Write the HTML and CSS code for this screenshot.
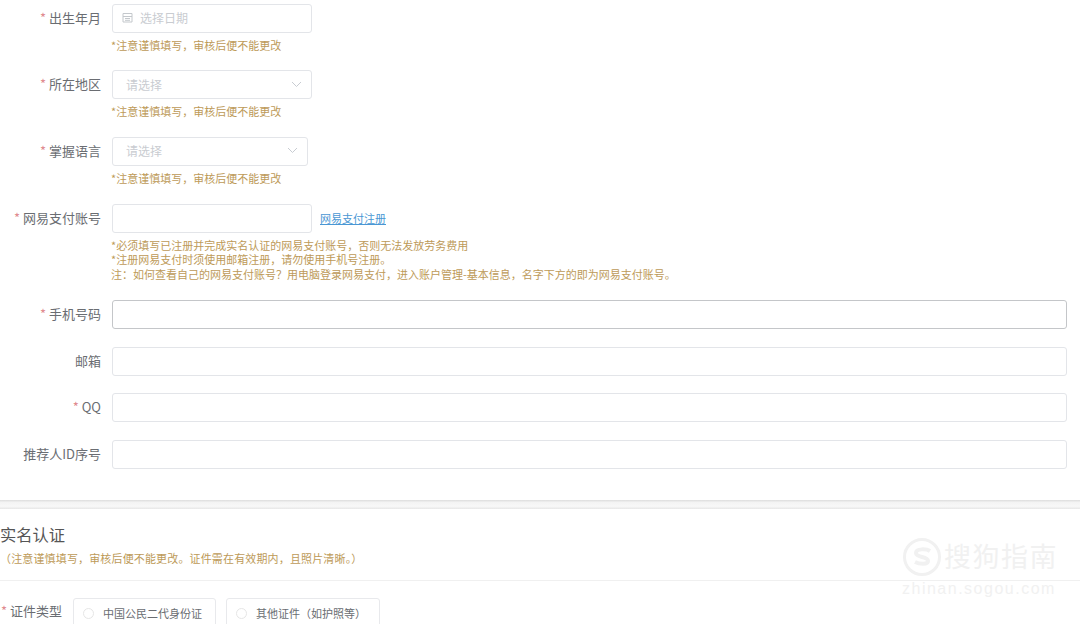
FILE: index.html
```html
<!DOCTYPE html>
<html lang="zh-CN">
<head>
<meta charset="utf-8">
<title>实名认证</title>
<link rel="stylesheet" href="styles.css">
</head>
<body>
<div class="page">
  <form class="form">
    <div class="row r-note">
      <label class="label"><span class="star">*</span> 出生年月</label>
      <div class="field">
        <div class="box w-200 date">
          <svg class="cal" width="11" height="11" viewBox="0 0 11 11"><path d="M1 1.500h9v8.500H1zM1 4.500h9M3 6.500h5M3 8.300h5" fill="none" stroke="#c4c8cc" stroke-width="1"/></svg>
          <span class="ph">选择日期</span>
        </div>
        <p class="note">*注意谨慎填写，审核后便不能更改</p>
      </div>
    </div>
    <div class="row r-note">
      <label class="label"><span class="star">*</span> 所在地区</label>
      <div class="field">
        <div class="box w-200 select">
          <span class="ph">请选择</span>
          <svg class="chev" width="11" height="7" viewBox="0 0 11 7"><path d="M1 1l4.500 4.500L10 1" fill="none" stroke="#c8ccd2" stroke-width="1"/></svg>
        </div>
        <p class="note">*注意谨慎填写，审核后便不能更改</p>
      </div>
    </div>
    <div class="row r-note">
      <label class="label"><span class="star">*</span> 掌握语言</label>
      <div class="field">
        <div class="box w-196 select">
          <span class="ph">请选择</span>
          <svg class="chev" width="11" height="7" viewBox="0 0 11 7"><path d="M1 1l4.500 4.500L10 1" fill="none" stroke="#c8ccd2" stroke-width="1"/></svg>
        </div>
        <p class="note">*注意谨慎填写，审核后便不能更改</p>
      </div>
    </div>
    <div class="row r-pay">
      <label class="label"><span class="star">*</span> 网易支付账号</label>
      <div class="field">
        <div class="inline">
          <div class="box w-200"></div>
          <a class="link" href="#">网易支付注册</a>
        </div>
        <p class="note multi">*必须填写已注册并完成实名认证的网易支付账号，否则无法发放劳务费用<br>*注册网易支付时须使用邮箱注册，请勿使用手机号注册。<br>注：如何查看自己的网易支付账号？用电脑登录网易支付，进入账户管理-基本信息，名字下方的即为网易支付账号。</p>
      </div>
    </div>
    <div class="row r-full">
      <label class="label"><span class="star">*</span> 手机号码</label>
      <div class="field"><div class="box focus"></div></div>
    </div>
    <div class="row r-full">
      <label class="label">邮箱</label>
      <div class="field"><div class="box"></div></div>
    </div>
    <div class="row r-full">
      <label class="label"><span class="star">*</span> QQ</label>
      <div class="field"><div class="box"></div></div>
    </div>
    <div class="row">
      <label class="label">推荐人ID序号</label>
      <div class="field"><div class="box"></div></div>
    </div>
  </form>
  <div class="band"></div>
  <section class="realname">
    <h2 class="title">实名认证</h2>
    <p class="sub">（注意谨慎填写，审核后便不能更改。证件需在有效期内，且照片清晰。）</p>
    <div class="idrow">
      <span class="idlabel"><span class="star">*</span> 证件类型</span>
      <div class="opt opt-a"><i class="radio"></i>中国公民二代身份证</div>
      <div class="opt opt-b"><i class="radio"></i>其他证件（如护照等）</div>
    </div>
  </section>
  <div class="mark">
    <svg class="mark-logo" width="40" height="40" viewBox="0 0 40 40"><circle cx="20" cy="20" r="17.500" fill="none" stroke="#f1f1f1" stroke-width="3"/><path d="M28 14c-3-2-14-3-14 2 0 5 12 3 12 8 0 4-9 3-13 1" fill="none" stroke="#f1f1f1" stroke-width="4"/></svg>
    <div class="mark-text">
      <span class="mark-cn">搜狗指南</span>
      <span class="mark-en">zhinan.sogou.com</span>
    </div>
  </div>
</div>
</body>
</html>
```
FILE: styles.css
```css
* { box-sizing: border-box; }
html, body { margin: 0; padding: 0; background: #fff; }
body {
  font-family: "Noto Sans CJK SC", "Liberation Sans", sans-serif;
  color: #666;
  overflow: hidden;
}
.page { position: relative; width: 1080px; height: 624px; overflow: hidden; }
.form { padding: 3.800px 13px 0 0; }
.row { display: flex; gap: 11px; }
.r-note { height: 66.600px; }
.r-pay { height: 96.600px; }
.r-full { height: 46.500px; }
.label {
  flex: 0 0 101px;
  height: 29px;
  line-height: 27px;
  text-align: right;
  font-size: 13px;
  color: #6a6d72;
  white-space: nowrap;
}
.star { color: #e08a8f; }
.field { flex: 1; min-width: 0; }
.box {
  height: 29px;
  border: 1px solid #e3e5e9;
  border-radius: 3px;
  background: #fff;
  display: flex;
  align-items: center;
  font-size: 12px;
}
.focus { border-color: #c4c6c9; }
.w-200 { width: 200px; }
.w-196 { width: 196px; }
.date { padding-left: 9px; padding-bottom: 1px; }
.cal { margin-right: 7px; }
.select { justify-content: space-between; padding: 0 9px 1px 13px; }
.ph { color: #c9ccd1; }
.note {
  margin: 4px 0 0 -1px;
  font-size: 11px;
  line-height: 16px;
  color: #bd9a58;
  white-space: nowrap;
}
.multi { margin-top: 5px; line-height: 14.500px; }
.inline { display: flex; align-items: center; gap: 8px; }
.link { font-size: 11px; color: #4a97d4; text-decoration: underline; }
.band {
  margin-top: 31px;
  height: 9px;
  background: linear-gradient(#dcdcdc, #f3f3f3 25%, #f8f8f8 70%, #e6e6e6);
}
.title {
  margin: 14px 0 0;
  font-size: 16.300px;
  line-height: 22px;
  font-weight: 400;
  color: #555;
}
.sub {
  margin: 4px 0 0;
  font-size: 11px;
  letter-spacing: 0.150px;
  line-height: 18px;
  color: #bd9a58;
  white-space: nowrap;
  padding-bottom: 13px;
  border-bottom: 1px solid #f0f0f0;
}
.idrow { display: flex; align-items: flex-start; margin-top: 17px; height: 40px; }
.idlabel { width: 73px; padding-left: 1px; font-size: 13px; line-height: 25px; color: #6a6d72; white-space: nowrap; }
.opt {
  display: flex;
  align-items: center;
  height: 29px;
  border: 1px solid #e8e9ec;
  border-radius: 3px;
  font-size: 11px;
  color: #6a6d72;
  padding: 2px 0 0 9px;
  white-space: nowrap;
}
.opt-a { width: 143px; margin-right: 10px; }
.opt-b { width: 154px; }
.radio {
  width: 11px;
  height: 11px;
  border: 1px solid #e6e6e6;
  border-radius: 50%;
  margin-right: 9px;
  flex: none;
}
.mark {
  position: absolute;
  left: 902px;
  top: 537px;
  display: flex;
  gap: 2px;
  color: #f1f1f1;
  pointer-events: none;
}
.mark-text { display: flex; flex-direction: column; }
.mark-cn { font-size: 27px; line-height: 38px; letter-spacing: 1.500px; white-space: nowrap; }
.mark-en { font-size: 16px; line-height: 18px; margin: 5px 0 0 -42px; letter-spacing: 1.500px; white-space: nowrap; font-family: "Liberation Sans", sans-serif; }
```
